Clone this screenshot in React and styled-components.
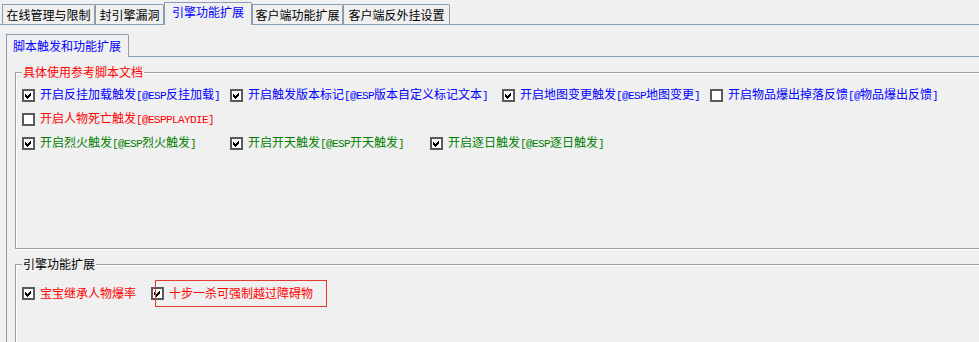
import React from "react";
import styled, { createGlobalStyle } from "styled-components";

const GlobalStyle = createGlobalStyle`
  html, body {
    margin: 0;
    padding: 0;
    background: #f0f0f0;
    overflow: hidden;
  }
  body {
    font-family: "Noto Sans CJK SC", "Liberation Sans", sans-serif;
    font-size: 12px;
    color: #000;
  }
`;

const TAB_LINE = "#8a9eb0";
const GROUP_LINE = "#a0a0a0";

const Page = styled.div`
  width: 979px;
  height: 342px;
  overflow: hidden;
`;

const Wide = styled.div`
  width: 1000px;
`;

const TabStrip = styled.div`
  display: flex;
  align-items: flex-end;
  height: 24px;
  padding-left: 2px;
  border-bottom: 1px solid ${TAB_LINE};
`;

const Tab = styled.div`
  box-sizing: border-box;
  width: ${(p) => p.$w}px;
  height: ${(p) => (p.$active ? 23 : 20)}px;
  margin-bottom: ${(p) => (p.$active ? -1 : 0)}px;
  border: 1px solid ${TAB_LINE};
  border-bottom: none;
  border-top-right-radius: 2px;
  background: #f0f0f0;
  color: ${(p) => (p.$active ? "#0000ff" : "#000")};
  text-align: center;
  line-height: ${(p) => (p.$active ? 17 : 19)}px;
  white-space: nowrap;
  position: relative;
  z-index: ${(p) => (p.$active ? 1 : 0)};
`;

const Inner = styled.div`
  margin-left: 6px;
`;

const InnerStrip = styled.div`
  display: flex;
  align-items: flex-end;
  padding-top: 9px;
  height: 22px;
  border-bottom: 1px solid ${TAB_LINE};
`;

const InnerTab = styled.div`
  box-sizing: border-box;
  height: 23px;
  margin-bottom: -1px;
  padding: 0 7px 0 6px;
  border: 1px solid ${TAB_LINE};
  border-bottom: none;
  border-top-right-radius: 2px;
  background: #f0f0f0;
  color: #0000ff;
  line-height: 21px;
  white-space: nowrap;
  position: relative;
`;

const InnerPanel = styled.div`
  border-left: 1px solid ${TAB_LINE};
  padding: 15px 0 0 8px;
  height: 300px;
`;

const Group = styled.div`
  position: relative;
  box-sizing: border-box;
  height: ${(p) => p.$h}px;
  margin-top: ${(p) => p.$mt || 0}px;
  padding: ${(p) => p.$pt}px 0 0 6px;
  border: 1px solid ${GROUP_LINE};
  box-shadow: inset 1px 1px 0 #fff, 1px 1px 0 #fff;
`;

const Legend = styled.div`
  position: absolute;
  top: -7px;
  left: 6px;
  padding: 0 1px;
  background: #f0f0f0;
  color: ${(p) => p.$color};
  line-height: 12px;
  white-space: nowrap;
`;

const Row = styled.div`
  display: flex;
  align-items: center;
  height: 24px;
`;

const Item = styled.div`
  position: relative;
  display: flex;
  align-items: center;
  gap: 5px;
  width: ${(p) => (p.$w ? `${p.$w}px` : "auto")};
  flex: none;
  color: ${(p) => p.$color};
  white-space: nowrap;
  line-height: 12px;

  ${(p) =>
    p.$highlight &&
    `
    &::after {
      content: "";
      position: absolute;
      left: 4px;
      top: -7px;
      width: 172px;
      height: 27px;
      box-sizing: border-box;
      border: 1px solid #e53935;
    }
  `}
`;

const Box = styled.span`
  box-sizing: border-box;
  width: 13px;
  height: 13px;
  flex: none;
  border: 2px solid #5a5a5a;
  background: #fff;
  display: flex;
  align-items: center;
  justify-content: center;
`;

const Half = styled.span`
  font-family: "Liberation Mono", monospace;
  font-size: 11px;
  letter-spacing: -0.6px;
`;

const BLUE = "#0000ff";
const RED = "#ff0000";
const GREEN = "#008000";

const Check = () => (
  <svg width="7" height="7" viewBox="0 0 7 7" shapeRendering="crispEdges">
    <path d="M0 2 L2 4 L6 0 L6 3 L2 7 L0 5 Z" fill="#000" />
  </svg>
);

const Label = ({ text }) =>
  text.split(/([\x00-\x7f]+)/).map((part, i) =>
    /^[\x00-\x7f]+$/.test(part) ? <Half key={i}>{part}</Half> : part
  );

const CheckItem = ({ w, color, checked, highlight, text }) => (
  <Item $w={w} $color={color} $highlight={highlight}>
    <Box>{checked && <Check />}</Box>
    <span>
      <Label text={text} />
    </span>
  </Item>
);

const tabs = [
  { label: "在线管理与限制", w: 93 },
  { label: "封引擎漏洞", w: 69 },
  { label: "引擎功能扩展", w: 88, active: true },
  { label: "客户端功能扩展", w: 91 },
  { label: "客户端反外挂设置", w: 107 },
];

const scriptRows = [
  [
    { w: 208, color: BLUE, checked: true, text: "开启反挂加载触发[@ESP反挂加载]" },
    { w: 272, color: BLUE, checked: true, text: "开启触发版本标记[@ESP版本自定义标记文本]" },
    { w: 208, color: BLUE, checked: true, text: "开启地图变更触发[@ESP地图变更]" },
    { color: BLUE, checked: false, text: "开启物品爆出掉落反馈[@物品爆出反馈]" },
  ],
  [{ color: RED, checked: false, text: "开启人物死亡触发[@ESPPLAYDIE]" }],
  [
    { w: 208, color: GREEN, checked: true, text: "开启烈火触发[@ESP烈火触发]" },
    { w: 200, color: GREEN, checked: true, text: "开启开天触发[@ESP开天触发]" },
    { color: GREEN, checked: true, text: "开启逐日触发[@ESP逐日触发]" },
  ],
];

export default function App() {
  return (
    <Page>
      <GlobalStyle />
      <Wide>
        <TabStrip>
          {tabs.map((t) => (
            <Tab key={t.label} $w={t.w} $active={t.active}>
              {t.label}
            </Tab>
          ))}
        </TabStrip>
        <Inner>
          <InnerStrip>
            <InnerTab>脚本触发和功能扩展</InnerTab>
          </InnerStrip>
          <InnerPanel>
            <Group $h={177} $pt={10}>
              <Legend $color={RED}>具体使用参考脚本文档</Legend>
              {scriptRows.map((row, i) => (
                <Row key={i}>
                  {row.map((it) => (
                    <CheckItem key={it.text} {...it} />
                  ))}
                </Row>
              ))}
            </Group>
            <Group $h={120} $mt={15} $pt={16}>
              <Legend $color="#000">引擎功能扩展</Legend>
              <Row>
                <CheckItem w={129} color={RED} checked text="宝宝继承人物爆率" />
                <CheckItem color={RED} checked highlight text="十步一杀可强制越过障碍物" />
              </Row>
            </Group>
          </InnerPanel>
        </Inner>
      </Wide>
    </Page>
  );
}
